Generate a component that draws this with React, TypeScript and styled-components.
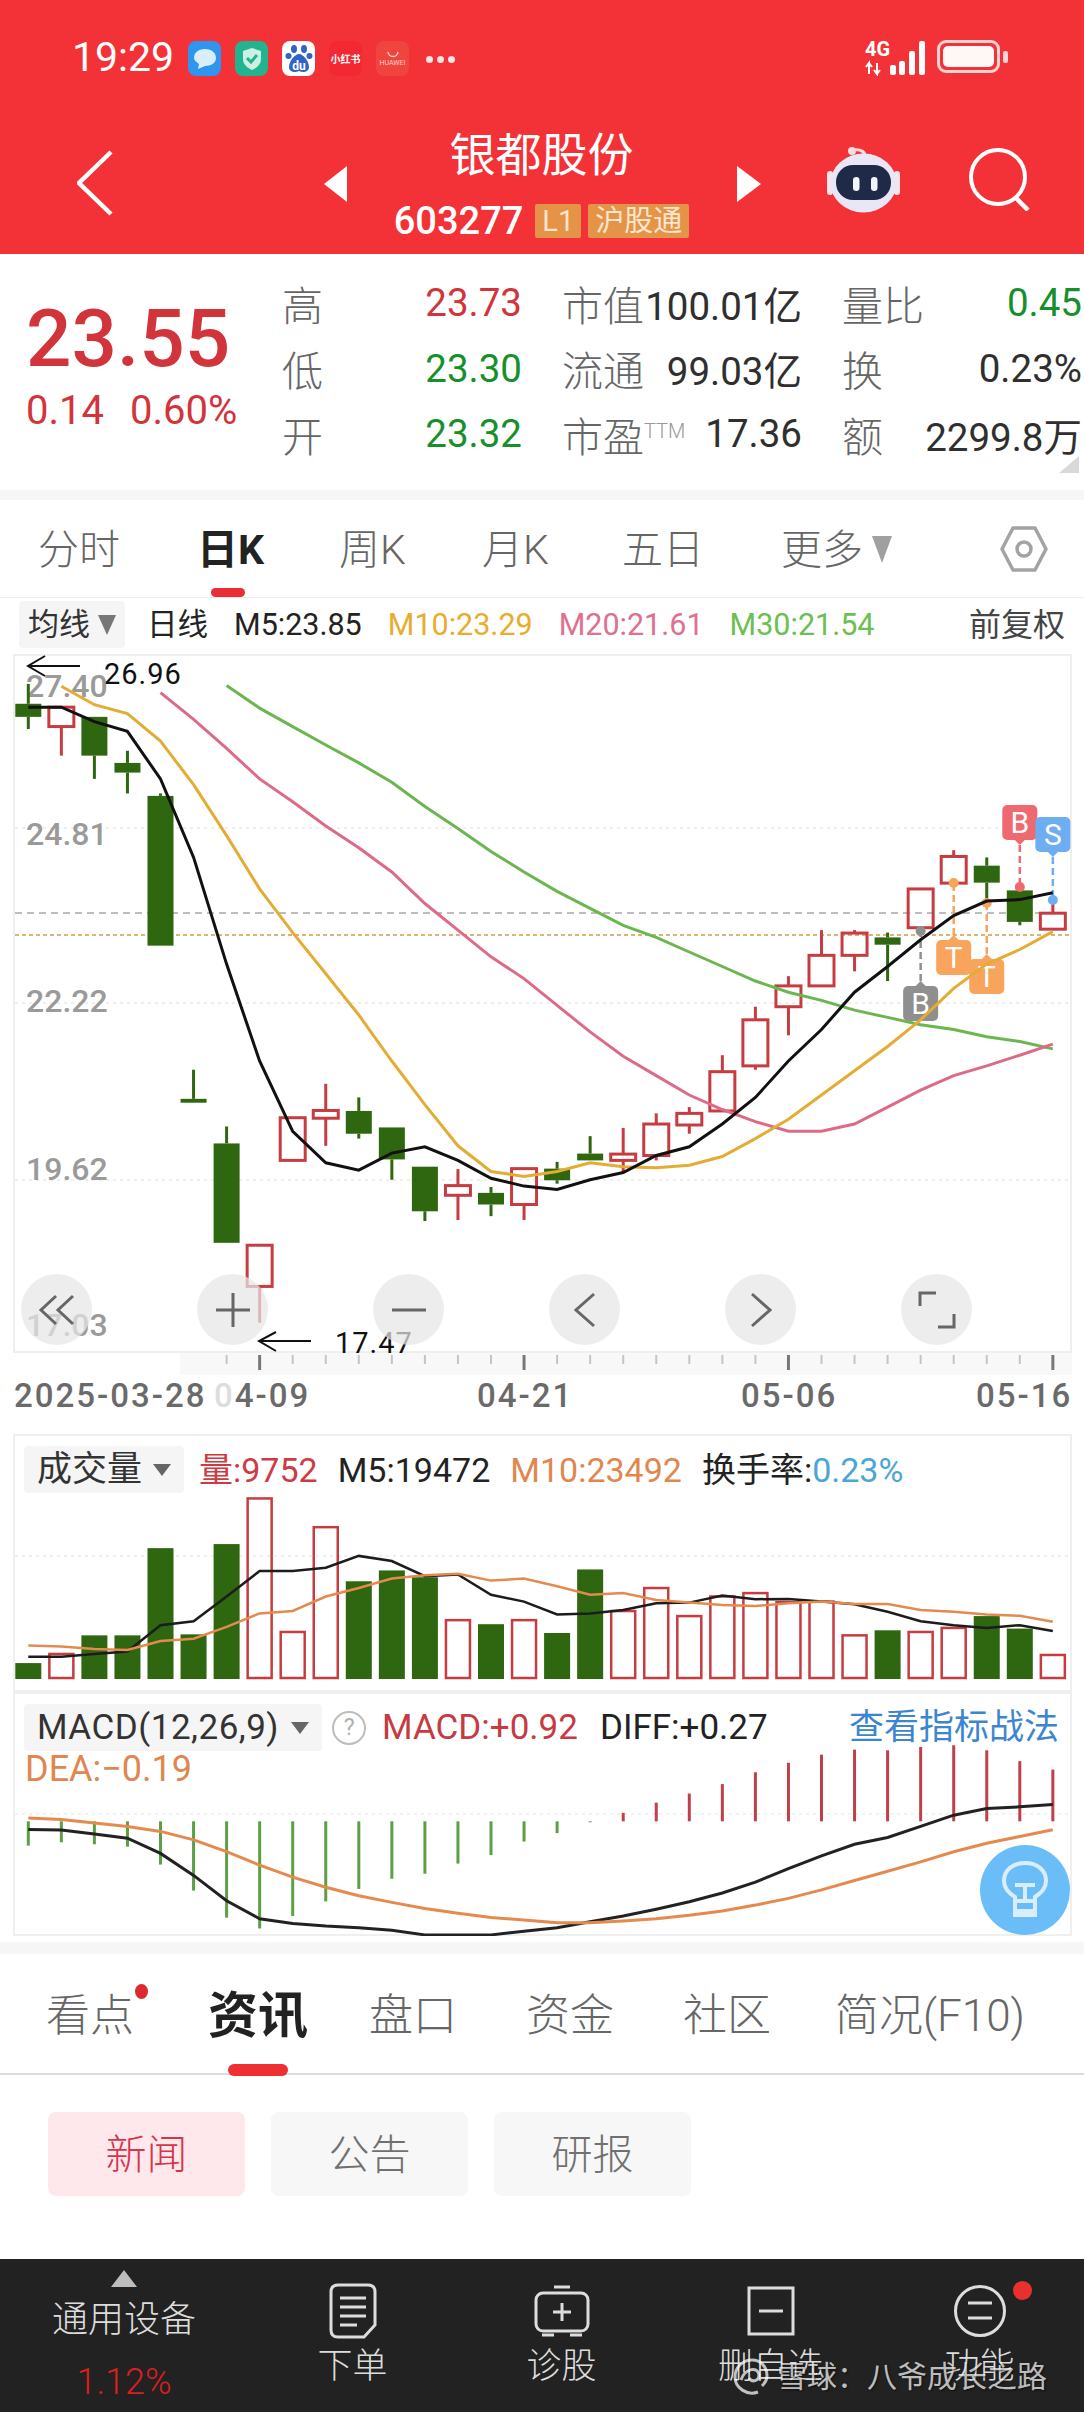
import styled, { createGlobalStyle } from 'styled-components';

const SANS = 'Roboto, "Noto Sans CJK SC", sans-serif';
const RED = '#d2343c';
const GREEN = '#17902b';
const CANDLE_RED = '#c63c40';
const CANDLE_GREEN = '#2f6610';

const GlobalStyle = createGlobalStyle`
  html, body {
    margin: 0;
    padding: 0;
    background: #fff;
    font-family: ${SANS};
  }
`;

const Page = styled.div`
  width: 1084px;
  height: 2412px;
  overflow: hidden;
  display: flex;
  flex-direction: column;
  background: #fff;
`;

/* ---------- red header ---------- */

const Header = styled.header`
  height: 254px;
  flex: none;
  background: #f23237;
  color: #fff;
`;

const StatusBar = styled.div`
  height: 100px;
  padding: 32px 73px 0 72px;
  box-sizing: border-box;
  display: flex;
  align-items: flex-start;
  gap: 14px;
`;

const Clock = styled.span`
  font-size: 41px;
  line-height: 50px;
  width: 102px;
  white-space: nowrap;
`;

const AppIcon = styled.div<{ $bg: string }>`
  width: 33px;
  height: 35px;
  margin-top: 9px;
  border-radius: 8px;
  background: ${(p) => p.$bg};
  display: flex;
  flex-direction: column;
  align-items: center;
  justify-content: center;
  font-size: 10px;
  font-weight: 700;
  white-space: nowrap;
  overflow: hidden;
`;

const TinyBrand = styled.span`
  font-size: 7px;
  font-weight: 400;
  color: #fbd3d0;
`;

const StatusDots = styled.div`
  display: flex;
  gap: 4px;
  margin: 24px 0 0 3px;
  span {
    width: 7px;
    height: 7px;
    border-radius: 50%;
    background: #fbe3e3;
  }
`;

const StatusRight = styled.div`
  margin-left: auto;
  margin-right: 11px;
  display: flex;
  align-items: center;
  gap: 12px;
  margin-top: 4px;
`;

const Battery = styled.div`
  position: relative;
  width: 63px;
  height: 33px;
  box-sizing: border-box;
  border: 3px solid rgba(255, 228, 228, 0.9);
  border-radius: 9px;
  padding: 3px;
  &::before {
    content: '';
    display: block;
    height: 100%;
    border-radius: 5px;
    background: #fff8f5;
  }
  &::after {
    content: '';
    position: absolute;
    right: -11px;
    top: 8px;
    width: 5px;
    height: 12px;
    border-radius: 2px;
    background: rgba(255, 228, 228, 0.9);
  }
`;

const NavRow = styled.div`
  height: 154px;
  display: grid;
  grid-template-columns: 1fr 437px 1fr;
`;

const NavLeft = styled.div`
  padding: 50px 0 0 77px;
`;

const NavCenter = styled.div`
  display: flex;
  align-items: flex-start;
  justify-content: space-between;
`;

const NavTriangle = styled.div<{ $dir: 'left' | 'right' }>`
  width: 0;
  height: 0;
  margin-top: 66px;
  border-top: 18px solid transparent;
  border-bottom: 18px solid transparent;
  ${(p) => (p.$dir === 'left' ? 'border-right: 23px solid #fff;' : 'border-left: 24px solid #fff;')}
`;

const Identity = styled.div`
  display: flex;
  flex-direction: column;
  align-items: center;
  padding-top: 26px;
`;

const StockName = styled.div`
  font-size: 46px;
  line-height: 50px;
  font-family: "Noto Sans CJK SC", sans-serif;
`;

const CodeRow = styled.div`
  margin-top: 27px;
  display: flex;
  align-items: center;
  gap: 7px;
`;

const StockCode = styled.span`
  font-size: 38px;
  line-height: 36px;
  font-weight: 500;
  margin-right: 5px;
`;

const Tag = styled.span`
  height: 34px;
  padding: 0 7px;
  background: #e59347;
  border-radius: 2px;
  color: #fbe6cf;
  font-size: 29px;
  line-height: 34px;
`;

const NavRight = styled.div`
  display: flex;
  justify-content: flex-end;
  align-items: flex-start;
  gap: 68px;
  padding: 47px 54px 0 0;
`;

/* ---------- quote block ---------- */

const Quote = styled.section`
  height: 236px;
  flex: none;
  position: relative;
  display: flex;
`;

const PriceBlock = styled.div`
  width: 282px;
  flex: none;
  padding: 38px 0 0 26px;
  box-sizing: border-box;
`;

const Price = styled.div`
  font-size: 80px;
  line-height: 94px;
  font-weight: 500;
  color: ${RED};
`;

const PriceChange = styled.div`
  margin-top: 3px;
  display: flex;
  gap: 26px;
  font-size: 40px;
  line-height: 44px;
  color: ${RED};
`;

const StatGrid = styled.div`
  padding-top: 16px;
  display: grid;
  grid-template-columns: repeat(3, 240px);
  grid-auto-rows: 65.5px;
  column-gap: 40px;
  align-content: start;
`;

const Stat = styled.div`
  display: flex;
  align-items: center;
  justify-content: space-between;
  white-space: nowrap;
`;

const StatLabel = styled.span`
  font-size: 41px;
  color: #666;
  font-weight: 300;
`;

const Superscript = styled.span`
  font-size: 20px;
  vertical-align: 14px;
  color: #999;
`;

const StatValue = styled.span<{ $color?: string }>`
  font-size: 38.5px;
  color: ${(p) => p.$color ?? '#2f2f2f'};
`;

const CornerMark = styled.div`
  position: absolute;
  right: 5px;
  bottom: 17px;
  width: 0;
  height: 0;
  border-left: 20px solid transparent;
  border-bottom: 17px solid #d9d9d9;
`;

const SectionGap = styled.div`
  height: 10px;
  flex: none;
  background: #f6f6f6;
`;

/* ---------- period tabs ---------- */

const PeriodTabs = styled.nav`
  height: 98px;
  flex: none;
  box-sizing: border-box;
  padding-left: 38px;
  display: grid;
  grid-template-columns: 159px 142px 143px 140px 159px 219px 1fr;
  align-items: center;
  border-bottom: 1px solid #eee;
`;

const PeriodTab = styled.span<{ $active?: boolean }>`
  position: relative;
  top: 1px;
  display: flex;
  align-items: center;
  font-size: 41px;
  line-height: 50px;
  color: ${(p) => (p.$active ? '#222' : '#666')};
  font-weight: ${(p) => (p.$active ? 700 : 300)};
  ${(p) =>
    p.$active &&
    `&::after {
      content: '';
      position: absolute;
      left: 14px;
      top: 63px;
      width: 34px;
      height: 9px;
      border-radius: 5px;
      background: #ea2e33;
    }`}
`;

const Caret = styled.span<{ $w: number; $h: number; $color: string }>`
  display: inline-block;
  width: 0;
  height: 0;
  flex: none;
  border-left: ${(p) => p.$w / 2}px solid transparent;
  border-right: ${(p) => p.$w / 2}px solid transparent;
  border-top: ${(p) => p.$h}px solid ${(p) => p.$color};
`;

const MoreCaret = styled(Caret)`
  margin-left: 9px;
`;

const MaRow = styled.div`
  height: 56px;
  flex: none;
  box-sizing: border-box;
  padding: 3px 19px 0;
  display: flex;
  align-items: flex-start;
  gap: 26px;
  font-size: 30.5px;
  line-height: 48px;
  white-space: nowrap;
`;

const ChipButton = styled.div`
  height: 47px;
  padding: 0 13px;
  display: flex;
  align-items: center;
  gap: 12px;
  background: #f5f5f5;
  border-radius: 4px;
  color: #333;
  font-size: 32px;
  white-space: nowrap;
`;

const MaChip = styled(ChipButton)`
  margin-right: -4px;
  padding: 0 9px;
  gap: 8px;
  font-size: 31px;
`;

const Legend = styled.span<{ $color?: string }>`
  color: ${(p) => p.$color ?? '#222'};
`;

const AdjustLabel = styled.span`
  margin-left: auto;
  color: #444;
  font-size: 32px;
`;

/* ---------- plots ---------- */

const Plot = styled.div<{ $h: number }>`
  position: relative;
  flex: none;
  width: 1059px;
  height: ${(p) => p.$h}px;
  margin-left: 13px;
  box-shadow: inset 0 0 0 2px #efefef;
`;

const PlotSvg = styled.svg`
  display: block;
`;

const AxisPrice = styled.text`
  font-size: 32px;
  font-weight: 500;
  fill: #9a9a9a;
  font-family: ${SANS};
`;

const Note = styled.text`
  font-size: 29px;
  letter-spacing: 1px;
  fill: #111;
  font-family: ${SANS};
`;

const AxisDate = styled.text`
  font-size: 33px;
  font-weight: 500;
  letter-spacing: 2px;
  fill: #6a6a6a;
  font-family: ${SANS};
`;

const MarkerLetter = styled.text`
  font-size: 30px;
  fill: #fff;
  text-anchor: middle;
  font-family: ${SANS};
`;

const ChartButtons = styled.div`
  position: absolute;
  left: 8px;
  top: 620px;
  display: flex;
  gap: 105px;
`;

const ChartButton = styled.div`
  width: 71px;
  height: 71px;
  border-radius: 50%;
  background: rgba(230, 230, 230, 0.72);
  display: flex;
  align-items: center;
  justify-content: center;
`;

const AxisStrip = styled.div`
  height: 81px;
  flex: none;
  svg {
    display: block;
  }
`;

const PlotHeader = styled.div<{ $gap: number }>`
  position: absolute;
  left: 11px;
  right: 13px;
  top: 12px;
  display: flex;
  align-items: center;
  gap: ${(p) => p.$gap}px;
  font-size: 34px;
  line-height: 46px;
  white-space: nowrap;
`;

const VolumeChip = styled(ChipButton)`
  font-size: 35px;
  margin-right: -5px;
  gap: 11px;
`;

const MacdChip = styled(ChipButton)`
  font-size: 35px;
  margin-right: -12px;
  letter-spacing: 0.5px;
`;

const HelpMark = styled.span`
  width: 30px;
  height: 30px;
  flex: none;
  border: 2px solid #bdbdbd;
  border-radius: 50%;
  color: #b0b0b0;
  font-size: 23px;
  line-height: 30px;
  text-align: center;
  margin-right: -6px;
`;

const MacdValue = styled(Legend)`
  font-size: 35px;
`;

const StrategyLink = styled.span`
  margin-left: auto;
  font-size: 35px;
  color: #3d86cf;
`;

const DeaLine = styled.div`
  position: absolute;
  left: 12px;
  top: 57px;
  font-size: 36px;
  line-height: 40px;
  color: #e0874f;
`;

const BulbButton = styled.div`
  position: absolute;
  left: 967px;
  top: 153px;
  width: 90px;
  height: 90px;
  border-radius: 50%;
  background: #6bbdf8;
  display: flex;
  align-items: center;
  justify-content: center;
`;

const PanelGap = styled.div`
  height: 6px;
  flex: none;
`;

const StripGap = styled.div`
  height: 12px;
  flex: none;
  background: #f6f6f6;
`;

/* ---------- lower tabs ---------- */

const NewsTabs = styled.nav`
  height: 121px;
  flex: none;
  box-sizing: border-box;
  padding: 4px 0 0 46px;
  display: grid;
  grid-template-columns: 162px 161px 157px 157px 152px 1fr;
  align-items: center;
  border-bottom: 2px solid #dcdcdc;
`;

const NewsTab = styled.span<{ $active?: boolean; $dot?: boolean }>`
  position: relative;
  font-size: ${(p) => (p.$active ? 50 : 44)}px;
  line-height: 60px;
  color: ${(p) => (p.$active ? '#222' : '#666')};
  font-weight: ${(p) => (p.$active ? 700 : 300)};
  white-space: nowrap;
  justify-self: start;
  ${(p) =>
    p.$active &&
    `&::after {
      content: '';
      position: absolute;
      left: 20px;
      top: 78px;
      width: 60px;
      height: 12px;
      border-radius: 6px;
      background: #ee2f33;
    }`}
  ${(p) =>
    p.$dot &&
    `&::after {
      content: '';
      position: absolute;
      right: -14px;
      top: -2px;
      width: 13px;
      height: 15px;
      border-radius: 50%;
      background: #dc2b30;
    }`}
`;

const SubTabs = styled.div`
  flex: 1;
  padding: 37px 0 0 48px;
  display: flex;
  align-items: flex-start;
  gap: 26px;
`;

const SubTab = styled.span<{ $active?: boolean }>`
  width: 197px;
  height: 84px;
  border-radius: 8px;
  background: ${(p) => (p.$active ? '#ffe8ec' : '#f7f7f7')};
  color: ${(p) => (p.$active ? '#d4354c' : '#707070')};
  font-size: 41px;
  font-weight: 300;
  line-height: 87px;
  text-align: center;
`;

/* ---------- bottom bar ---------- */

const BottomBar = styled.footer`
  position: relative;
  height: 153px;
  flex: none;
  background: #222;
  color: #ddd;
  display: grid;
  grid-template-columns: 248px repeat(4, 209px);
`;

const BarItem = styled.div`
  padding-top: 24px;
  display: flex;
  flex-direction: column;
  align-items: center;
  font-size: 35px;
  font-weight: 300;
`;

const BarIconBox = styled.div`
  position: relative;
  height: 56px;
  display: flex;
  align-items: center;
  justify-content: center;
`;

const BarLabel = styled.span`
  margin-top: 7px;
  line-height: 42px;
  white-space: nowrap;
`;

const SectorItem = styled(BarItem)`
  padding-top: 11px;
`;

const SectorArrow = styled.div`
  width: 0;
  height: 0;
  border-left: 13px solid transparent;
  border-right: 13px solid transparent;
  border-bottom: 17px solid #bdbdbd;
`;

const SectorName = styled.span`
  margin-top: 10px;
  font-size: 36px;
  line-height: 46px;
`;

const SectorChange = styled.span`
  margin-top: 17px;
  font-size: 36px;
  line-height: 44px;
  color: #d91f1f;
`;

const RedDot = styled.span`
  position: absolute;
  right: -26px;
  top: -2px;
  width: 19px;
  height: 19px;
  border-radius: 50%;
  background: #e8312f;
`;

const Watermark = styled.div`
  position: absolute;
  left: 733px;
  top: 97px;
  display: flex;
  align-items: center;
  gap: 8px;
  font-size: 30px;
  line-height: 42px;
  color: rgba(255, 255, 255, 0.72);
  text-shadow: 1px 1px 2px rgba(0, 0, 0, 0.6);
  white-space: nowrap;
`;

/* ---------- chart data ---------- */

// Every series shares one x step per trading day.
const X0 = 28.3;
const STEP = 33.05;
const candleX = (i: number) => X0 + i * STEP;

// Series values are stored in chart units; each pane maps them to page pixels.
const priceY = (v: number) => 650 + v / 2.063;
const lowerY = (v: number) => 1420 + v / 2.958;

type Candle = [up: boolean, wickTop: number, bodyTop: number, bodyBottom: number, wickBottom: number];

const CANDLES: Candle[] = [
  [false, 72, 113, 140, 165],
  [true, 120, 120, 160, 220],
  [false, 140, 140, 220, 268],
  [false, 210, 235, 255, 298],
  [false, 298, 303, 612, 612],
  [false, 868, 928, 936, 936],
  [false, 985, 1020, 1225, 1225],
  [true, 1230, 1230, 1315, 1390],
  [true, 967, 967, 1055, 1055],
  [true, 897, 952, 968, 1025],
  [false, 925, 953, 1000, 1010],
  [false, 987, 987, 1053, 1095],
  [false, 1068, 1068, 1160, 1180],
  [true, 1073, 1107, 1127, 1178],
  [false, 1110, 1122, 1146, 1170],
  [true, 1072, 1072, 1146, 1178],
  [false, 1058, 1072, 1096, 1103],
  [false, 1005, 1041, 1055, 1055],
  [true, 988, 1042, 1055, 1078],
  [true, 958, 980, 1045, 1055],
  [true, 945, 958, 982, 1000],
  [true, 838, 872, 953, 953],
  [true, 738, 765, 860, 868],
  [true, 675, 695, 738, 797],
  [true, 580, 632, 695, 695],
  [true, 580, 586, 632, 665],
  [false, 585, 595, 610, 685],
  [true, 495, 495, 575, 590],
  [true, 415, 428, 483, 483],
  [false, 430, 447, 482, 520],
  [false, 490, 498, 563, 570],
  [true, 520, 545, 578, 578],
];

const MA5 = [120, 120, 150, 170, 268, 430, 650, 850, 995, 1060, 1075, 1040, 1027, 1055, 1092, 1108, 1115, 1095, 1080, 1045, 1027, 980, 925, 850, 785, 708, 655, 600, 550, 520, 517, 503];
const MA10 = [77, 115, 133, 190, 280, 385, 495, 585, 670, 755, 850, 940, 1025, 1078, 1088, 1078, 1060, 1068, 1070, 1065, 1047, 1010, 970, 920, 870, 820, 765, 700, 650, 620, 583];
const MA20 = [90, 145, 205, 268, 315, 365, 410, 460, 525, 580, 635, 680, 735, 790, 840, 880, 920, 950, 975, 995, 995, 980, 945, 910, 880, 860, 838, 815];
const MA30 = [75, 122, 160, 198, 235, 275, 325, 370, 418, 460, 500, 535, 570, 595, 625, 655, 685, 708, 725, 745, 760, 775, 785, 800, 810, 825];

const VOLUMES: [boolean, number][] = [
  [false, 722], [true, 695], [false, 640], [false, 640], [false, 382], [false, 637], [false, 370], [true, 235],
  [true, 630], [true, 320], [false, 480], [false, 448], [false, 468], [true, 595], [false, 607], [true, 595],
  [false, 633], [false, 445], [true, 568], [true, 500], [true, 583], [true, 525], [true, 515], [true, 542],
  [true, 540], [true, 640], [false, 625], [true, 630], [true, 618], [false, 583], [false, 620], [true, 698],
];
const VOL_M5 = [703, 703, 695, 688, 610, 598, 525, 450, 450, 440, 405, 420, 465, 460, 520, 540, 578, 575, 565, 545, 543, 522, 533, 532, 540, 548, 570, 598, 610, 618, 610, 627];
const VOL_M10 = [670, 673, 680, 683, 657, 650, 615, 575, 568, 525, 500, 472, 462, 458, 478, 472, 495, 520, 515, 535, 543, 550, 553, 545, 540, 547, 547, 565, 570, 578, 582, 600];

const MACD_ZERO = 1190;
const MACD_BARS = [1262, 1252, 1258, 1265, 1318, 1395, 1475, 1507, 1470, 1427, 1390, 1360, 1345, 1315, 1290, 1250, 1225, 1193, 1165, 1135, 1108, 1080, 1045, 1017, 993, 978, 980, 970, 965, 980, 1012, 1037];
const DIFF = [1214, 1216, 1228, 1240, 1285, 1350, 1425, 1478, 1492, 1500, 1505, 1512, 1526, 1526, 1526, 1515, 1505, 1487, 1470, 1450, 1428, 1402, 1370, 1330, 1292, 1258, 1238, 1205, 1172, 1152, 1147, 1140];
const DEA = [1180, 1185, 1195, 1205, 1220, 1245, 1280, 1320, 1355, 1385, 1410, 1430, 1448, 1462, 1475, 1482, 1490, 1490, 1485, 1478, 1468, 1455, 1438, 1418, 1393, 1365, 1338, 1310, 1280, 1255, 1235, 1215];

const PRICE_TICKS: [string, number][] = [
  ['27.40', 698],
  ['24.81', 846],
  ['22.22', 1013],
  ['19.62', 1181],
  ['17.03', 1337],
];

const GRID_LINES = [829, 1004, 1181];

const linePoints = (values: number[], start: number, toY: (v: number) => number) =>
  values.map((v, i) => `${candleX(i + start).toFixed(1)},${toY(v).toFixed(1)}`).join(' ');

type MarkerProps = {
  index: number;
  top: number;
  dotY: number;
  color: string;
  letter: string;
  pointsUp?: boolean;
};

// Trade marker: a rounded flag tied to its candle by a dashed leader.
const Marker = ({ index, top, dotY, color, letter, pointsUp }: MarkerProps) => {
  const x = candleX(index);
  const tipY = pointsUp ? top - 5 : top + 40;
  return (
    <g>
      <line x1={x} y1={tipY} x2={x} y2={dotY} stroke={color} strokeWidth={2.5} strokeDasharray="7 4" />
      <circle cx={x} cy={dotY} r={5} fill={color} />
      <rect x={x - 17.5} y={top} width={35} height={35} rx={5} fill={color} />
      <polygon points={`${x - 6},${pointsUp ? top + 1 : top + 34} ${x + 6},${pointsUp ? top + 1 : top + 34} ${x},${tipY}`} fill={color} />
      <MarkerLetter x={x} y={top + 28}>{letter}</MarkerLetter>
    </g>
  );
};

const CandleChart = () => (
  <PlotSvg width={1059} height={699} viewBox="13 655 1059 699">
    {GRID_LINES.map((y) => (
      <line key={y} x1={15} x2={1070} y1={y} y2={y} stroke="#e9e9e9" strokeWidth={1.5} strokeDasharray="3 4" />
    ))}
    <line x1={15} x2={1070} y1={914} y2={914} stroke="#a8a8a8" strokeWidth={1.5} strokeDasharray="7 5" />
    <line x1={15} x2={1070} y1={936} y2={936} stroke="#d29a46" strokeWidth={1.5} strokeDasharray="4 3" />
    {PRICE_TICKS.map(([label, y]) => (
      <AxisPrice key={label} x={26} y={y}>{label}</AxisPrice>
    ))}
    {CANDLES.map(([up, wickTop, bodyTop, bodyBottom, wickBottom], i) => {
      const x = candleX(i);
      const color = up ? CANDLE_RED : CANDLE_GREEN;
      const top = priceY(bodyTop);
      const bottom = priceY(bodyBottom);
      return (
        <g key={i}>
          <line x1={x} x2={x} y1={priceY(wickTop)} y2={top} stroke={color} strokeWidth={3} />
          <line x1={x} x2={x} y1={bottom} y2={priceY(wickBottom)} stroke={color} strokeWidth={3} />
          {up ? (
            <rect x={x - 12.5} y={top} width={25} height={bottom - top} fill="none" stroke={color} strokeWidth={3} />
          ) : (
            <rect x={x - 13} y={top} width={26} height={bottom - top} fill={color} />
          )}
        </g>
      );
    })}
    <Marker index={27} top={987} dotY={932} color="#8f8f8f" letter="B" pointsUp />
    <Marker index={28} top={941} dotY={884} color="#f8a45c" letter="T" pointsUp />
    <Marker index={29} top={960} dotY={904} color="#f8a45c" letter="T" pointsUp />
    <Marker index={30} top={806} dotY={888} color="#ee6a70" letter="B" />
    <Marker index={31} top={818} dotY={901} color="#6dadf2" letter="S" />
    <polyline points={linePoints(MA30, 6, priceY)} fill="none" stroke="#6cb650" strokeWidth={3} />
    <polyline points={linePoints(MA20, 4, priceY)} fill="none" stroke="#dd6b88" strokeWidth={3} />
    <polyline points={linePoints(MA10, 1, priceY)} fill="none" stroke="#e4ac34" strokeWidth={3} />
    <polyline points={linePoints(MA5, 0, priceY)} fill="none" stroke="#111" strokeWidth={3} />
    <path d="M45 657 L28 667 L45 677 M28 667 H80" fill="none" stroke="#111" strokeWidth={2} />
    <Note x={104} y={685}>26.96</Note>
    <path d="M276 1333 L259 1342 L276 1352 M259 1342 H311" fill="none" stroke="#111" strokeWidth={2} />
    <Note x={335} y={1354}>17.47</Note>
  </PlotSvg>
);

const DateAxis = () => (
  <svg width={1084} height={81} viewBox="0 1354 1084 81">
    <rect x={180} y={1354} width={892} height={22} fill="#f9f8f8" />
    {CANDLES.map((_, i) => {
      if (i < 6) return null;
      const major = (i - 7) % 8 === 0;
      return (
        <line
          key={i}
          x1={candleX(i)}
          x2={candleX(i)}
          y1={1356}
          y2={major ? 1371 : 1365}
          stroke={major ? '#777' : '#c4c4c4'}
          strokeWidth={major ? 3 : 2}
        />
      );
    })}
    <AxisDate x={14} y={1408}>2025-03-28</AxisDate>
    <AxisDate x={214} y={1408}><tspan fill="#ddd">0</tspan>4-09</AxisDate>
    <AxisDate x={477} y={1408}>04-21</AxisDate>
    <AxisDate x={741} y={1408}>05-06</AxisDate>
    <AxisDate x={976} y={1408}>05-16</AxisDate>
  </svg>
);

const VolumeChart = () => (
  <PlotSvg width={1059} height={258} viewBox="13 1435 1059 258">
    <line x1={15} x2={1070} y1={1557} y2={1557} stroke="#e9e9e9" strokeWidth={1.5} strokeDasharray="3 4" />
    {VOLUMES.map(([up, top], i) => {
      const x = candleX(i);
      const y = lowerY(top);
      return up ? (
        <rect key={i} x={x - 12} y={y} width={24} height={1679 - y} fill="none" stroke={CANDLE_RED} strokeWidth={2.5} />
      ) : (
        <rect key={i} x={x - 13} y={y} width={26} height={1680 - y} fill={CANDLE_GREEN} />
      );
    })}
    <polyline points={linePoints(VOL_M5, 0, lowerY)} fill="none" stroke="#1c1c1c" strokeWidth={2.5} />
    <polyline points={linePoints(VOL_M10, 0, lowerY)} fill="none" stroke="#e58a4e" strokeWidth={2.5} />
  </PlotSvg>
);

const MacdChart = () => (
  <PlotSvg width={1059} height={244} viewBox="13 1693 1059 244">
    <line x1={15} x2={1070} y1={1815} y2={1815} stroke="#eee" strokeWidth={1.5} strokeDasharray="3 4" />
    {MACD_BARS.map((end, i) => (
      <line
        key={i}
        x1={candleX(i)}
        x2={candleX(i)}
        y1={lowerY(MACD_ZERO)}
        y2={lowerY(end)}
        stroke={end > MACD_ZERO ? '#5c9f45' : '#bf4049'}
        strokeWidth={3}
      />
    ))}
    <polyline points={linePoints(DIFF, 0, lowerY)} fill="none" stroke="#222" strokeWidth={3} />
    <polyline points={linePoints(DEA, 0, lowerY)} fill="none" stroke="#e58a4e" strokeWidth={3} />
  </PlotSvg>
);

/* ---------- small drawings ---------- */

const BackIcon = () => (
  <svg width={36} height={66} viewBox="0 0 36 66">
    <polyline points="34,2 2,33 34,64" fill="none" stroke="#fff" strokeWidth={4.5} />
  </svg>
);

const RobotIcon = () => (
  <svg width={73} height={66} viewBox="0 0 73 66">
    <circle cx={25} cy={4} r={4} fill="#f6dede" />
    <path d="M27 3 C34 2 38 5 38 9" fill="none" stroke="#f3dcdc" strokeWidth={3} />
    <rect x={0} y={24} width={6} height={24} rx={3} fill="#f3e6ee" />
    <rect x={67} y={24} width={6} height={24} rx={3} fill="#f3e6ee" />
    <ellipse cx={36.5} cy={36} rx={33} ry={29.5} fill="#e9e7f6" />
    <rect x={9} y={18} width={55} height={35} rx={17} fill="#1f2a48" />
    <rect x={26} y={30} width={6.5} height={14} rx={3.2} fill="#f4f6ff" />
    <rect x={44} y={30} width={6.5} height={14} rx={3.2} fill="#f4f6ff" />
  </svg>
);

const SearchIcon = () => (
  <svg width={62} height={64} viewBox="0 0 62 64">
    <circle cx={30} cy={30} r={27} fill="none" stroke="#fff" strokeWidth={4} />
    <line x1={47} y1={50} x2={60} y2={63} stroke="#fff" strokeWidth={4.5} />
  </svg>
);

const SettingsHex = () => (
  <svg width={48} height={46} viewBox="0 0 48 46">
    <polygon points="13,2 35,2 46,23 35,44 13,44 2,23" fill="none" stroke="#a3a3a3" strokeWidth={3.5} strokeLinejoin="round" />
    <circle cx={24} cy={23} r={7} fill="none" stroke="#a3a3a3" strokeWidth={3.5} />
  </svg>
);

const SignalIcon = () => (
  <svg width={60} height={40} viewBox="0 -4 60 40" fill="#fff">
    <text x={0} y={16} fontSize={20} fontWeight={700} fontFamily="Roboto, sans-serif">4G</text>
    <path d="M4 34 V23 L1 27 M4 23 L7 27 M12 23 V34 L9 30 M12 34 L15 30" fill="none" stroke="#fff" strokeWidth={2} />
    <rect x={25} y={25} width={6} height={10} rx={2} />
    <rect x={34} y={21} width={6} height={14} rx={2} />
    <rect x={44} y={11} width={6} height={24} rx={2} />
    <rect x={54} y={1} width={6} height={34} rx={2} />
  </svg>
);

const stroke = { fill: 'none', stroke: '#666', strokeWidth: 3 };

const RewindIcon = () => (
  <svg width={38} height={38} viewBox="0 0 38 38">
    <path d="M18 5 L3 19 L18 33 M35 5 L20 19 L35 33" {...stroke} />
  </svg>
);

const PlusIcon = () => (
  <svg width={36} height={36} viewBox="0 0 36 36">
    <path d="M18 1 V35 M1 18 H35" {...stroke} />
  </svg>
);

const MinusIcon = () => (
  <svg width={36} height={8} viewBox="0 0 36 8">
    <path d="M1 4 H35" {...stroke} />
  </svg>
);

const ChevronIcon = ({ flip }: { flip?: boolean }) => (
  <svg width={22} height={36} viewBox="0 0 22 36">
    <path d={flip ? 'M2 2 L20 18 L2 34' : 'M20 2 L2 18 L20 34'} {...stroke} />
  </svg>
);

const ExpandIcon = () => (
  <svg width={38} height={38} viewBox="0 0 38 38">
    <path d="M2 15 V2 H18 M36 23 V36 H20" {...stroke} />
  </svg>
);

const BulbIcon = () => (
  <svg width={48} height={58} viewBox="0 0 48 58" fill="none" stroke="#d8eefc" strokeWidth={4}>
    <path d="M14 40 V36 C6 31 3 25 3 20 C3 9 12 2 24 2 C36 2 45 9 45 20 C45 25 42 31 34 36 V40 Z" />
    <path d="M14 24 H34 M24 24 V40 M16 50 H32" />
    <path d="M14 40 V54 H34 V40" />
  </svg>
);

const barStroke = { fill: 'none', stroke: '#ddd', strokeWidth: 3 };

const OrderIcon = () => (
  <svg width={48} height={56} viewBox="0 0 48 56">
    <path d="M9 2 H39 Q46 2 46 9 V42 L35 54 H9 Q2 54 2 47 V9 Q2 2 9 2 Z" {...barStroke} />
    <path d="M11 15 H37 M11 24 H37 M11 33 H37 M11 42 H28" {...barStroke} />
  </svg>
);

const DiagnoseIcon = () => (
  <svg width={56} height={52} viewBox="0 0 56 52">
    <path d="M20 2 H36" {...barStroke} />
    <rect x={2} y={8} width={52} height={38} rx={7} {...barStroke} />
    <path d="M28 18 V36 M19 27 H37 M8 50 H20 M36 50 H48" {...barStroke} />
  </svg>
);

const RemoveIcon = () => (
  <svg width={48} height={50} viewBox="0 0 48 50">
    <rect x={2} y={2} width={44} height={46} {...barStroke} />
    <path d="M12 25 H36" {...barStroke} />
  </svg>
);

const MoreIcon = () => (
  <svg width={52} height={52} viewBox="0 0 52 52">
    <circle cx={26} cy={26} r={24.5} {...barStroke} />
    <path d="M14 18 H38 M14 33 H38" {...barStroke} />
  </svg>
);

const XueqiuLogo = () => (
  <svg width={36} height={38} viewBox="0 0 36 38" fill="none" stroke="rgba(255,255,255,0.72)" strokeWidth={3}>
    <path d="M25 34 C14 38 2 30 2 19 C2 9 10 2 19 2 C28 2 34 9 34 18 C34 22 32 25 29 28" />
    <path d="M8 22 C12 10 25 8 26 17 C26 23 19 25 16 20" />
  </svg>
);

const STATS: { label: React.ReactNode; value: string; color?: string }[] = [
  { label: '高', value: '23.73', color: RED },
  { label: '市值', value: '100.01亿' },
  { label: '量比', value: '0.45', color: GREEN },
  { label: '低', value: '23.30', color: GREEN },
  { label: '流通', value: '99.03亿' },
  { label: '换', value: '0.23%' },
  { label: '开', value: '23.32', color: GREEN },
  { label: <>市盈<Superscript>TTM</Superscript></>, value: '17.36' },
  { label: '额', value: '2299.8万' },
];

const App = () => {
  return (
    <Page>
      <GlobalStyle />
      <Header>
        <StatusBar>
          <Clock>19:29</Clock>
          <AppIcon $bg="#2f95ef">
            <svg width={24} height={22} viewBox="0 0 24 22"><path d="M12 1 C19 1 23 5 23 10 C23 15 18 18 12 18 L5 21 L6 16 C3 14 1 12 1 10 C1 5 5 1 12 1 Z" fill="#d8eefb" /></svg>
          </AppIcon>
          <AppIcon $bg="#22b38f">
            <svg width={22} height={24} viewBox="0 0 22 24"><path d="M11 1 L20 4 V12 C20 18 15 21 11 23 C7 21 2 18 2 12 V4 Z" fill="#cdf0e4" /><path d="M6 11 L10 15 L16 8" fill="none" stroke="#22b38f" strokeWidth={3} /></svg>
          </AppIcon>
          <AppIcon $bg="#fff">
            <svg width={28} height={30} viewBox="0 0 28 30" fill="#2f63c8">
              <ellipse cx={9} cy={5} rx={3} ry={4} /><ellipse cx={19} cy={5} rx={3} ry={4} /><circle cx={3.5} cy={12} r={3} /><circle cx={24.5} cy={12} r={3} />
              <path d="M14 10 C18 10 24 17 24 23 C24 28 18 29 14 27 C10 29 4 28 4 23 C4 17 10 10 14 10 Z" />
              <text x={14} y={26} fontSize={12} fontWeight={700} fill="#fff" textAnchor="middle" fontFamily="Roboto, sans-serif">du</text>
            </svg>
          </AppIcon>
          <AppIcon $bg="#f22833">小红书</AppIcon>
          <AppIcon $bg="#f0443f">
            <svg width={14} height={8} viewBox="0 0 14 8"><path d="M2 1 C3 7 11 7 12 1" fill="none" stroke="#fbd3d0" strokeWidth={1.5} /></svg>
            <TinyBrand>HUAWEI</TinyBrand>
          </AppIcon>
          <StatusDots><span /><span /><span /></StatusDots>
          <StatusRight>
            <SignalIcon />
            <Battery />
          </StatusRight>
        </StatusBar>
        <NavRow>
          <NavLeft><BackIcon /></NavLeft>
          <NavCenter>
            <NavTriangle $dir="left" />
            <Identity>
              <StockName>银都股份</StockName>
              <CodeRow>
                <StockCode>603277</StockCode>
                <Tag>L1</Tag>
                <Tag>沪股通</Tag>
              </CodeRow>
            </Identity>
            <NavTriangle $dir="right" />
          </NavCenter>
          <NavRight>
            <RobotIcon />
            <SearchIcon />
          </NavRight>
        </NavRow>
      </Header>

      <Quote>
        <PriceBlock>
          <Price>23.55</Price>
          <PriceChange><span>0.14</span><span>0.60%</span></PriceChange>
        </PriceBlock>
        <StatGrid>
          {STATS.map((s) => (
            <Stat key={s.value}>
              <StatLabel>{s.label}</StatLabel>
              <StatValue $color={s.color}>{s.value}</StatValue>
            </Stat>
          ))}
        </StatGrid>
        <CornerMark />
      </Quote>
      <SectionGap />

      <PeriodTabs>
        <PeriodTab>分时</PeriodTab>
        <PeriodTab $active>日K</PeriodTab>
        <PeriodTab>周K</PeriodTab>
        <PeriodTab>月K</PeriodTab>
        <PeriodTab>五日</PeriodTab>
        <PeriodTab>更多<MoreCaret $w={20} $h={27} $color="#a0a0a0" /></PeriodTab>
        <SettingsHex />
      </PeriodTabs>

      <MaRow>
        <MaChip>均线<Caret $w={18} $h={20} $color="#777" /></MaChip>
        <Legend>日线</Legend>
        <Legend>M5:23.85</Legend>
        <Legend $color="#e6ad2e">M10:23.29</Legend>
        <Legend $color="#e0708f">M20:21.61</Legend>
        <Legend $color="#6cbf52">M30:21.54</Legend>
        <AdjustLabel>前复权</AdjustLabel>
      </MaRow>

      <Plot $h={699}>
        <CandleChart />
        <ChartButtons>
          <ChartButton><RewindIcon /></ChartButton>
          <ChartButton><PlusIcon /></ChartButton>
          <ChartButton><MinusIcon /></ChartButton>
          <ChartButton><ChevronIcon /></ChartButton>
          <ChartButton><ChevronIcon flip /></ChartButton>
          <ChartButton><ExpandIcon /></ChartButton>
        </ChartButtons>
      </Plot>
      <AxisStrip><DateAxis /></AxisStrip>

      <Plot $h={258}>
        <VolumeChart />
        <PlotHeader $gap={20}>
          <VolumeChip>成交量<Caret $w={18} $h={12} $color="#666" /></VolumeChip>
          <Legend $color="#cf3b42">量:9752</Legend>
          <Legend>M5:19472</Legend>
          <Legend $color="#e0874f">M10:23492</Legend>
          <Legend>换手率:<Legend $color="#4aa6d6">0.23%</Legend></Legend>
        </PlotHeader>
      </Plot>

      <Plot $h={244}>
        <MacdChart />
        <PlotHeader $gap={22}>
          <MacdChip>MACD(12,26,9)<Caret $w={18} $h={12} $color="#666" /></MacdChip>
          <HelpMark>?</HelpMark>
          <MacdValue $color="#c73a42">MACD:+0.92</MacdValue>
          <MacdValue>DIFF:+0.27</MacdValue>
          <StrategyLink>查看指标战法</StrategyLink>
        </PlotHeader>
        <DeaLine>DEA:−0.19</DeaLine>
        <BulbButton><BulbIcon /></BulbButton>
      </Plot>
      <PanelGap />
      <StripGap />

      <NewsTabs>
        <NewsTab $dot>看点</NewsTab>
        <NewsTab $active>资讯</NewsTab>
        <NewsTab>盘口</NewsTab>
        <NewsTab>资金</NewsTab>
        <NewsTab>社区</NewsTab>
        <NewsTab>简况(F10)</NewsTab>
      </NewsTabs>

      <SubTabs>
        <SubTab $active>新闻</SubTab>
        <SubTab>公告</SubTab>
        <SubTab>研报</SubTab>
      </SubTabs>

      <BottomBar>
        <SectorItem>
          <SectorArrow />
          <SectorName>通用设备</SectorName>
          <SectorChange>1.12%</SectorChange>
        </SectorItem>
        <BarItem>
          <BarIconBox><OrderIcon /></BarIconBox>
          <BarLabel>下单</BarLabel>
        </BarItem>
        <BarItem>
          <BarIconBox><DiagnoseIcon /></BarIconBox>
          <BarLabel>诊股</BarLabel>
        </BarItem>
        <BarItem>
          <BarIconBox><RemoveIcon /></BarIconBox>
          <BarLabel>删自选</BarLabel>
        </BarItem>
        <BarItem>
          <BarIconBox><MoreIcon /><RedDot /></BarIconBox>
          <BarLabel>功能</BarLabel>
        </BarItem>
        <Watermark><XueqiuLogo />雪球：八爷成长之路</Watermark>
      </BottomBar>
    </Page>
  );
};

export default App;
